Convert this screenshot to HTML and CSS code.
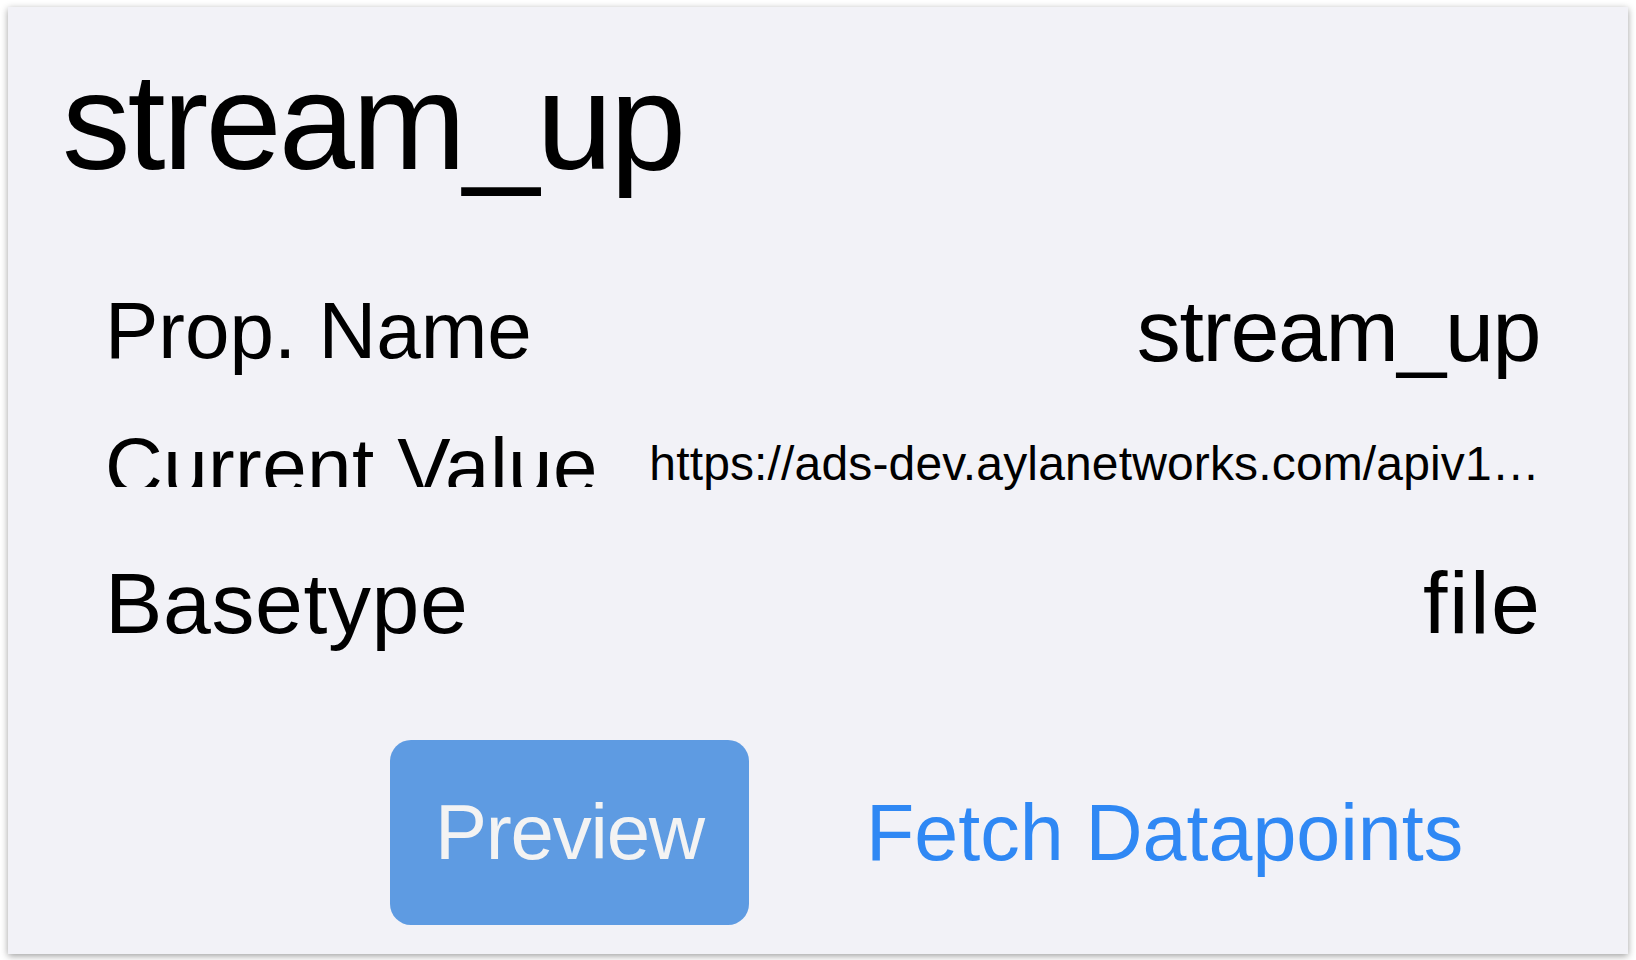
FILE: index.html
```html
<!DOCTYPE html>
<html lang="en">
<head>
<meta charset="utf-8">
<title>stream_up</title>
<link rel="stylesheet" href="styles.css">
</head>
<body>
<div class="card">
  <h1 class="title">stream_up</h1>
  <div class="rows">
    <div class="row">
      <span class="label">Prop. Name</span>
      <span class="value">stream_up</span>
    </div>
    <div class="row">
      <span class="label label-clip">Current Value</span>
      <span class="value value-small">https://ads-dev.aylanetworks.com/apiv1…</span>
    </div>
    <div class="row">
      <span class="label label-large">Basetype</span>
      <span class="value value-wide">file</span>
    </div>
  </div>
  <div class="actions">
    <button class="btn-primary" type="button">Preview</button>
    <button class="btn-link" type="button">Fetch Datapoints</button>
  </div>
</div>
</body>
</html>
```

FILE: styles.css
```css
html, body {
  margin: 0;
  background: #ffffff;
}

body {
  padding: 7px 8px 6px;
  font-family: "Liberation Sans", Arial, sans-serif;
  color: #000;
}

.card {
  box-sizing: border-box;
  height: 947px;
  background: #f2f2f7;
  box-shadow: 0 2px 7px rgba(0, 0, 0, 0.38);
  padding: 35px 88px 0 54px;
  display: flex;
  flex-direction: column;
}

.title {
  margin: 0;
  font-weight: 400;
  font-size: 137px;
  line-height: 160px;
  height: 160px;
  letter-spacing: -2.9px;
}

.rows {
  margin-top: 61px;
  margin-left: 43px;
  display: flex;
  flex-direction: column;
}

.row {
  height: 136px;
  display: flex;
  justify-content: space-between;
  align-items: center;
  white-space: nowrap;
}

.label {
  font-size: 80px;
  line-height: 88px;
}

.label-clip {
  font-size: 80px;
  letter-spacing: 0.4px;
  align-self: flex-start;
  margin-top: 24px;
  height: 64px;
  overflow: hidden;
}

.label-large {
  font-size: 86px;
  letter-spacing: 0.6px;
}

.value {
  font-size: 88px;
  line-height: 100px;
  letter-spacing: -1.4px;
}

.value-small {
  font-size: 48px;
  line-height: 60px;
  letter-spacing: 0.15px;
  margin-bottom: 6px;
}

.value-wide {
  letter-spacing: 1.5px;
  margin-right: -1.5px;
}

.actions {
  margin-top: 69px;
  padding-left: 328px;
  display: flex;
  align-items: center;
  gap: 117px;
}

.btn-primary {
  width: 359px;
  height: 185px;
  border: none;
  border-radius: 21px;
  background: #5e9be2;
  color: #f3f3f3;
  font-family: "Liberation Sans", Arial, sans-serif;
  font-size: 78px;
  letter-spacing: -1.2px;
  padding: 0;
  display: flex;
  align-items: center;
  justify-content: center;
}

.btn-link {
  border: none;
  background: none;
  padding: 0;
  color: #2f88f4;
  font-family: "Liberation Sans", Arial, sans-serif;
  font-size: 79px;
  line-height: 100px;
}
```
